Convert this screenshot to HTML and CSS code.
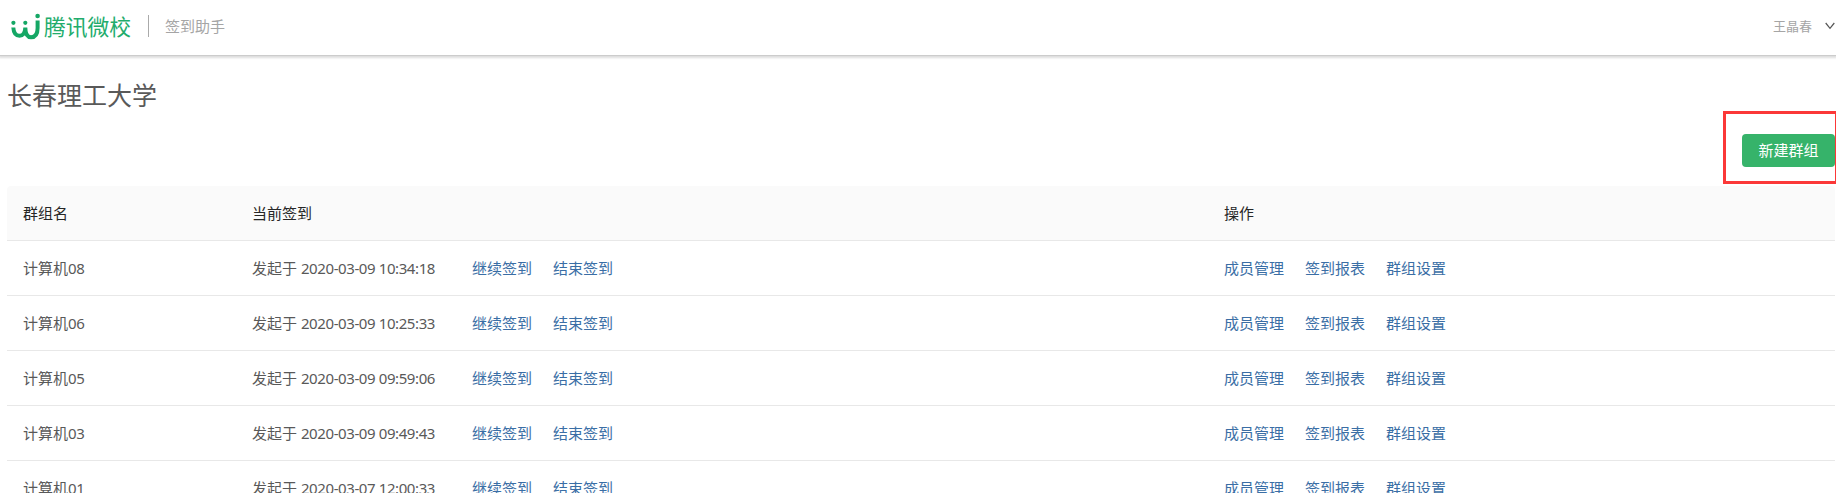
FILE: index.html
```html
<!DOCTYPE html>

<html lang="zh-CN">
    <head>
        <meta charset="utf-8">
        <title>签到助手</title>
        <link rel="stylesheet" href="styles.css">
    </head>
    <body>

        <div class="header">
            <svg class="logo" width="30" height="28" viewBox="0 0 30 28">
                <path d="M2.3 14.5 Q2.8 22.8 8.5 22.8 Q14 22.8 14.3 14.5 Q14.5 24.3 20 24.3 Q26.6 24.3 26.6 15 V7.5" fill="none" stroke="#15a765" stroke-width="4"/>
                <circle cx="2.4" cy="9.8" r="2.1" fill="#15a765"/>
                <circle cx="14.3" cy="9.8" r="2.1" fill="#15a765"/>
                <circle cx="26.6" cy="3" r="2.3" fill="#15a765"/>
            </svg>
            <span class="brand">腾讯微校</span>
            <span class="app_name">签到助手</span>
            <span class="user">王晶春</span>
            <svg class="arrow" width="10" height="8" viewBox="0 0 10 8">
                <path d="M0.7 1 L5 6.3 L9.3 1" fill="none" stroke="#555" stroke-width="1.2"/>
            </svg>
        </div>

        <div class="content">
            <h1>长春理工大学</h1>

            <div class="toolbar">
                <div class="mark"><button class="btn">新建群组</button></div>
            </div>

            <table>
                <thead>
                    <tr><th class="name">群组名</th><th class="current">当前签到</th><th>操作</th></tr>
                </thead>
                <tbody id="groups"></tbody>
            </table>
        </div>

        <script>
            var groups = [
                ["08", "2020-03-09 10:34:18"],
                ["06", "2020-03-09 10:25:33"],
                ["05", "2020-03-09 09:59:06"],
                ["03", "2020-03-09 09:49:43"],
                ["01", "2020-03-07 12:00:33"]
            ];
            var rows = "";

            for (var i = 0; i < groups.length; i++)
            {
                rows += "<tr><td>计算机<span class='num'>" + groups[i][0] + "</span></td>";
                rows += "<td><div class='cell'><span class='time'>发起于 <span class='num'>" + groups[i][1] + "</span></span>";
                rows += "<a>继续签到</a><a>结束签到</a></div></td>";
                rows += "<td><div class='cell'><a>成员管理</a><a>签到报表</a><a>群组设置</a></div></td></tr>";
            }

            document.getElementById("groups").innerHTML = rows;
        </script>
    </body>
</html>
```
FILE: styles.css
```css
html, body{
    height: 100%;
    overflow: hidden;
}

body{
    margin: 0;
    font-family: "Noto Sans", "Noto Sans CJK SC", sans-serif;
    font-size: 15px;
    color: #595959;
    background-color: #fff;
}

.header{
    display: flex;
    align-items: center;
    height: 55px;
    padding: 0 1px 0 11px;
    box-sizing: border-box;
    box-shadow: 0 1px 0 #ccc, 0 2px 2px 1px #ddd;
}

.logo{
    margin-bottom: 1px;
}

.brand{
    margin-left: 3px;
    padding-bottom: 3px;
    font-family: "Noto Sans CJK SC", sans-serif;
    font-size: 21.75px;
    line-height: 30px;
    color: #22ac6c;
}

.app_name{
    margin-left: 17px;
    padding-left: 16px;
    border-left: 1px solid #aaa;
    height: 22px;
    line-height: 23px;
    margin-bottom: 3px;
    color: #a5a5a5;
}

.user{
    margin-left: auto;
    margin-bottom: 4px;
    font-size: 13px;
    color: #a5a5a5;
}

.arrow{
    margin-left: 13px;
    margin-bottom: 3px;
}

.content{
    padding: 0 1px 0 7px;
}

h1{
    margin: 0;
    padding-top: 25px;
    font-size: 25px;
    font-weight: normal;
    line-height: 31px;
}

.toolbar{
    display: flex;
    justify-content: flex-end;
    margin-right: -2px;
    padding-bottom: 2px;
}

/* highlight around the create button */
.mark{
    padding: 20px 0 14px 16px;
    border: 3px solid #fb3838;
    border-right-width: 2px;
}

.btn{
    display: block;
    width: 93px;
    height: 33px;
    padding: 0 0 2px;
    border: 0;
    border-radius: 4px;
    font-family: inherit;
    font-size: 15px;
    color: #fff;
    background-color: #36b36a;
}

table{
    width: 100%;
    table-layout: fixed;
    border-collapse: separate;
    border-spacing: 0;
}

th, td{
    height: 54px;
    padding: 0 0 0 16px;
    text-align: left;
    line-height: 22px;
    border-bottom: 1px solid #e8e8e8;
}

th{
    font-weight: normal;
    color: #262626;
    background-color: #fafafa;
}

th:first-child{
    border-top-left-radius: 4px;
}

th:last-child{
    border-top-right-radius: 4px;
}

.name{
    width: 213px;
}

.current{
    width: 956px;
}

.cell{
    display: flex;
    gap: 21px;
}

.time{
    width: 199px;
    white-space: nowrap;
}

.num{
    letter-spacing: -0.4px;
}

a{
    color: #3a6ea5;
}
```
